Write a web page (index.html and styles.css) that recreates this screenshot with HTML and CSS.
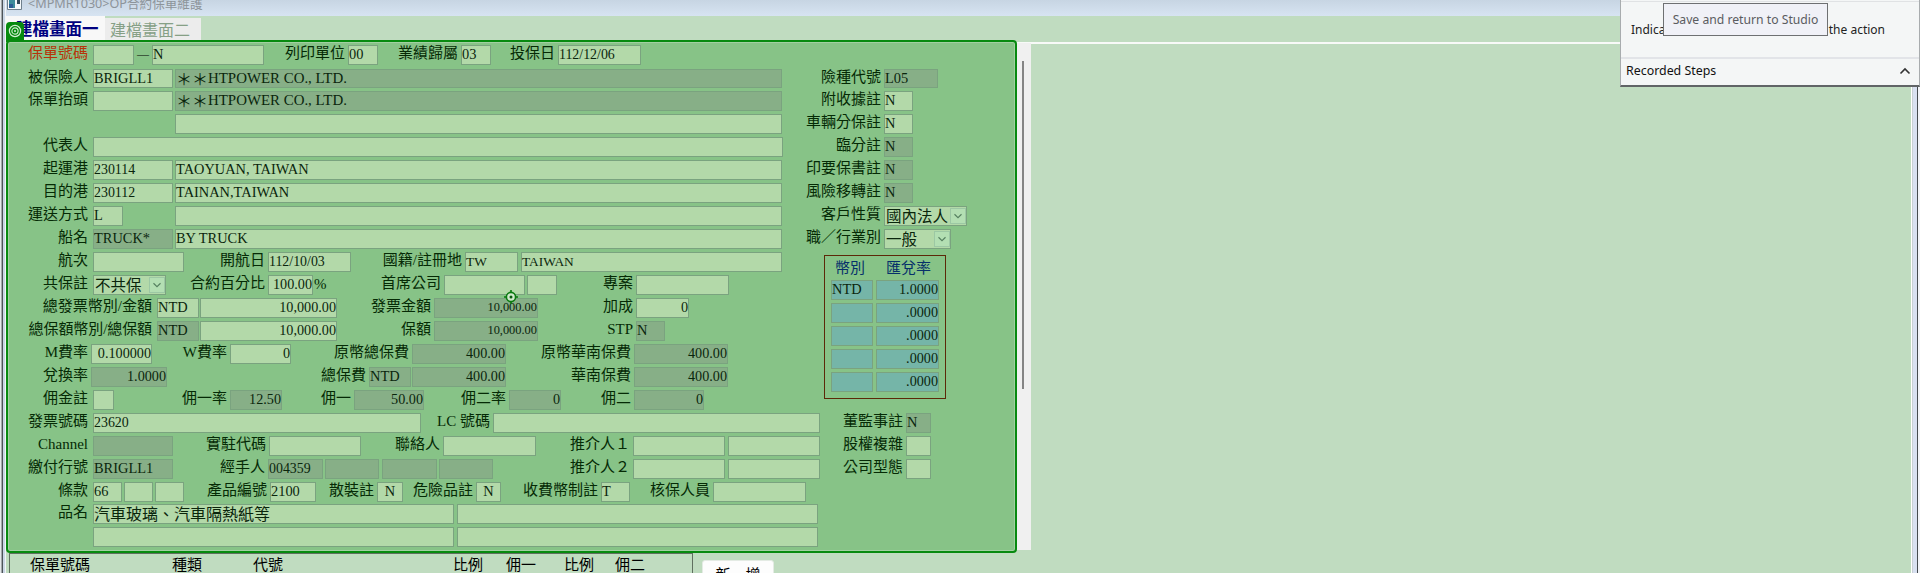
FILE: index.html
```html
<!DOCTYPE html>
<html lang="zh-Hant">
<head>
<meta charset="utf-8">
<title>OP合約保單維護</title>
<link rel="stylesheet" href="styles.css">
</head>
<body>
<div class="window">
  <div class="edge edge-left"></div>
  <main class="main">
    <header class="titlebar">
      <svg class="appicon" width="15" height="10" viewBox="0 0 15 10"><path d="M.5 0v9.5h14V0" fill="#f4f8fa" stroke="#70808c"/><path d="M2 0h6v8H2z" fill="#3c8c9c"/><path d="M2 4h4v4H2z" fill="#2c5c94"/><path d="M10 0h3v4h-3z" fill="#304858"/></svg>
      <span>&lt;MPMR1030&gt;OP合約保單維護</span>
    </header>
    <nav class="tabs">
      <div class="tab active">建檔畫面一</div>
      <div class="tab">建檔畫面二</div>
    </nav>
    <div class="work">
      <section class="panel">
        <div class="upper">
          <div class="col-left">
            <div class="row r1"><label class="red">保單號碼</label><i class="f"></i><label class="dash">—</label><i class="f">N</i><label>列印單位</label><i class="f">00</i><label>業績歸屬</label><i class="f">03</i><label>投保日</label><i class="f num">112/12/06</i></div>
            <div class="row r2"><label>被保險人</label><i class="f">BRIGLL1</i><i class="f d g2 co"><b>＊＊</b>HTPOWER CO., LTD.</i></div>
            <div class="row r2"><label>保單抬頭</label><i class="f"></i><i class="f d g2 co"><b>＊＊</b>HTPOWER CO., LTD.</i></div>
            <div class="row r4"><label></label><i class="f"></i></div>
            <div class="row r5"><label>代表人</label><i class="f"></i></div>
            <div class="row r2"><label>起運港</label><i class="f num">230114</i><i class="f g2">TAOYUAN, TAIWAN</i></div>
            <div class="row r2"><label>目的港</label><i class="f num">230112</i><i class="f g2">TAINAN,TAIWAN</i></div>
            <div class="row r8"><label>運送方式</label><i class="f">L</i><label></label><i class="f"></i></div>
            <div class="row r2"><label>船名</label><i class="f d">TRUCK*</i><i class="f g2">BY TRUCK</i></div>
            <div class="row r10"><label>航次</label><i class="f"></i><label>開航日</label><i class="f num">112/10/03</i><label>國籍/註冊地</label><i class="f sm">TW</i><i class="f g3 sm">TAIWAN</i></div>
            <div class="row r11"><label>共保註</label><i class="f sel"><span>不共保</span><svg width="16" height="16" viewBox="0 0 16 16"><path d="M4 6l4 4 4-4"/></svg></i><label>合約百分比</label><i class="f r">100.00</i><label class="pct">%</label><label>首席公司</label><i class="f"></i><i class="f g2"></i><label>專案</label><i class="f"></i></div>
            <div class="row r12"><label>總發票幣別/金額</label><i class="f">NTD</i><i class="f g1 r">10,000.00</i><label>發票金額</label><i class="f d r xs">10,000.00</i><label>加成</label><i class="f r">0</i></div>
            <div class="row r13"><label class="wide">總保額幣別/總保額</label><i class="f d">NTD</i><i class="f g1 r">10,000.00</i><label>保額</label><i class="f d r xs">10,000.00</i><label>STP</label><i class="f d">N</i></div>
            <div class="row r14"><label>M費率</label><i class="f r">0.100000</i><label>W費率</label><i class="f r">0</i><label>原幣總保費</label><i class="f d r">400.00</i><label>原幣華南保費</label><i class="f d r">400.00</i></div>
            <div class="row r15"><label>兌換率</label><i class="f d r">1.0000</i><label>總保費</label><i class="f d">NTD</i><i class="f d g1 r">400.00</i><label>華南保費</label><i class="f d r">400.00</i></div>
            <div class="row r16"><label>佣金註</label><i class="f"></i><label>佣一率</label><i class="f d r">12.50</i><label>佣一</label><i class="f d r">50.00</i><label>佣二率</label><i class="f d r">0</i><label>佣二</label><i class="f d r">0</i></div>
          </div>
          <div class="col-right">
            <div class="row q w54"><label>險種代號</label><i class="f d">L05</i></div>
            <div class="row q w29"><label>附收據註</label><i class="f">N</i></div>
            <div class="row q w29"><label>車輛分保註</label><i class="f">N</i></div>
            <div class="row q w29"><label>臨分註</label><i class="f d">N</i></div>
            <div class="row q w29"><label>印要保書註</label><i class="f d">N</i></div>
            <div class="row q w29"><label>風險移轉註</label><i class="f d">N</i></div>
            <div class="row q w83"><label>客戶性質</label><i class="f sel"><span>國內法人</span><svg width="16" height="16" viewBox="0 0 16 16"><path d="M4 6l4 4 4-4"/></svg></i></div>
            <div class="row q w67"><label>職／行業別</label><i class="f sel"><span>一般</span><svg width="16" height="16" viewBox="0 0 16 16"><path d="M4 6l4 4 4-4"/></svg></i></div>
            <div class="rates">
              <div class="rates-head"><span>幣別</span><span>匯兌率</span></div>
              <div class="rate"><i class="f t">NTD</i><i class="f t r">1.0000</i></div>
              <div class="rate"><i class="f t"></i><i class="f t r">.0000</i></div>
              <div class="rate"><i class="f t"></i><i class="f t r">.0000</i></div>
              <div class="rate"><i class="f t"></i><i class="f t r">.0000</i></div>
              <div class="rate"><i class="f t"></i><i class="f t r">.0000</i></div>
            </div>
          </div>
        </div>
        <div class="row r17"><label>發票號碼</label><i class="f num">23620</i><label>LC 號碼</label><i class="f"></i><label>董監事註</label><i class="f d">N</i></div>
        <div class="row r18"><label>Channel</label><i class="f d"></i><label>實駐代碼</label><i class="f"></i><label>聯絡人</label><i class="f"></i><label>推介人１</label><i class="f"></i><i class="f g3"></i><label>股權複雜</label><i class="f"></i></div>
        <div class="row r19"><label>繳付行號</label><i class="f d">BRIGLL1</i><label>經手人</label><i class="f d num">004359</i><i class="f d g2"></i><i class="f d g3"></i><i class="f d g2"></i><label>推介人２</label><i class="f"></i><i class="f g3"></i><label>公司型態</label><i class="f"></i></div>
        <div class="row r20"><label>條款</label><i class="f">66</i><i class="f g2"></i><i class="f g2"></i><label>產品編號</label><i class="f">2100</i><label>散裝註</label><i class="f c">N</i><label>危險品註</label><i class="f c">N</i><label>收費幣制註</label><i class="f">T</i><label>核保人員</label><i class="f"></i></div>
        <div class="row r21"><label>品名</label><i class="f cjk">汽車玻璃、汽車隔熱紙等</i><i class="f g3"></i></div>
        <div class="row r21"><label></label><i class="f"></i><i class="f g3"></i></div>
        <div class="badge"><svg width="18" height="18" viewBox="0 0 18 18" fill="none" stroke="#d5efd5"><circle cx="9" cy="9" r="5.6" stroke-width="1.2"/><circle cx="9" cy="9" r="3.1" stroke-width="1.1"/><circle cx="9" cy="9" r="1" fill="#d5efd5" stroke="none"/></svg></div>
        <svg class="target" width="14" height="14" viewBox="0 0 14 14"><path d="M7 0v14M0 7h14" stroke="#0a7a10" stroke-width="1.6"/><circle cx="7" cy="7" r="4.6" fill="#cfeacb" stroke="#0a7a10" stroke-width="1.6"/><circle cx="7" cy="7" r="1.5" fill="#0a5a10"/></svg>
      </section>
      <div class="scroll"><div class="thumb"></div></div>
    </div>
    <footer class="footer">
      <div class="list-head"><span>保單號碼</span><span>種類</span><span>代號</span><span>比例</span><span>佣一</span><span>比例</span><span>佣二</span></div>
      <button class="add">新　增</button>
    </footer>
  </main>
  <div class="edge edge-right"></div>
</div>
<aside class="recorder">
  <div class="rec-msg"><span>Indica</span><span>the action</span></div>
  <div class="rec-steps"><span>Recorded Steps</span><svg width="12" height="8" viewBox="0 0 12 8"><path d="M1.5 6.5L6 2l4.500 4.500" fill="none" stroke="#333" stroke-width="1.6"/></svg></div>
  <div class="tip">Save and return to Studio</div>
</aside>
</body>
</html>
```
FILE: styles.css
```css
* { box-sizing: border-box; }
body { margin: 0; width: 1920px; height: 573px; overflow: hidden; background: #c0dcc0; font-family: "Liberation Serif", "Noto Sans CJK TC", serif; }
.window { display: flex; height: 573px; }
.edge { flex: none; }
.edge-left { width: 6px; background: linear-gradient(90deg, #e4e8ea 0 1px, #a4a9ac 1px 2px, #4c5358 2px 3px, #c9d6e4 3px 5px, #f4f6f8 5px 6px); }
.edge-right { width: 9px; background: linear-gradient(90deg, #fff 0 1px, #c8d0d4 1px 2px, #d8e0f0 2px 6px, #454a4e 6px 7px, #f2f4f8 7px); }
.main { width: 1905px; display: flex; flex-direction: column; overflow: hidden; }
.titlebar { height: 16px; flex: none; display: flex; background: linear-gradient(#c7d5e3, #d7e4f2); font-family: "Noto Sans", "Noto Sans CJK TC", sans-serif; color: #8d949a; }
.titlebar span { margin: -4px 0 0 6px; font-size: 12.600px; line-height: 16px; white-space: nowrap; }
.appicon { margin-left: 1px; }
.tabs { height: 24px; flex: none; display: flex; align-items: flex-end; }
.tab { width: 96px; height: 22px; background: #ececec; color: #86a086; font: 400 16px/22px "Noto Sans CJK TC", sans-serif; padding-left: 5px; white-space: nowrap; }
.tab.active { width: 99px; height: 24px; background: #f8f8f8; color: #000080; font-weight: 700; font-size: 16.500px; line-height: 24px; padding-left: 10px; }
.work { height: 513px; flex: none; display: flex; align-items: flex-start; background: linear-gradient(#c0dcc0 0 2px, #f8faf8 2px 4px, #c0dcc0 4px); }
.panel { position: relative; width: 1011px; height: 513px; flex: none; border: 2px solid #078a0f; border-radius: 4px; background: #87c387; box-shadow: inset 0 0 0 1px #a2d0a2; padding-top: 3px; }
.upper { display: flex; height: 368px; }
.col-left { width: 775px; flex: none; }
.col-right { width: 232px; padding-top: 24px; }
.row { display: grid; height: 20px; margin-bottom: 3px; }
.r1 { margin-bottom: 4px; }
.col-left .r1 + .r2, .col-right .row:first-child { height: 19px; }
.row label { display: flex; justify-content: flex-end; padding-right: 3px; font: 400 15px/17px "Liberation Serif", "Noto Sans CJK TC", serif; white-space: nowrap; color: #052a05; min-width: 0; }
.row label:first-child { padding-right: 5px; }
.row label.red { color: #b83208; }
.row label.wide { letter-spacing: -.08px; }
.row label.dash { padding-right: 3px; font-size: 12px; line-height: 19px; color: #000; }
.row label.pct { justify-content: flex-start; padding: 0 0 0 1px; line-height: 18px; }
.f { display: block; font-style: normal; font-size: 14.400px; line-height: 17px; border: 1px solid #7aa37f; background: #b3d9a9; color: #0a250c; white-space: nowrap; padding-left: 0; min-width: 0; }
.co { display: flex; font-size: 14.900px; }
.f b { font: 400 16px/17px "Noto Sans CJK TC", sans-serif; flex: none; }
.d { background: #87af87; }
.t { background: #75b5a8; }
.r { text-align: right; font-size: 14.200px; padding-right: 0; }
.num { font-size: 13.900px; }
.sm { font-size: 13.400px; }
.xs { font-size: 12.400px; }
.c { text-align: center; }
.cjk { font: 400 16px/17px "Noto Sans CJK TC", sans-serif; padding: 0; }
.g1 { margin-left: 1px; }
.g2 { margin-left: 2px; }
.g3 { margin-left: 3px; }
.sel { display: flex; justify-content: space-between; align-items: center; font: 400 15.500px/16px "Noto Sans CJK TC", sans-serif; padding: 0 0 0 1px; }
.sel span { line-height: 16px; margin-top: -2px; }
.sel svg { flex: none; background: #b3dfb3; border: 1px solid #9cc8a4; fill: none; stroke: #568060; stroke-width: 1.3; }

.r1 { grid-template-columns: 85px 41px 18px 112px 84px 30px 83px 30px 67px 83px; }
.r2 { grid-template-columns: 85px 80px 609px; }
.r4 { grid-template-columns: 167px 607px; }
.r5 { grid-template-columns: 85px 690px; }
.r8 { grid-template-columns: 85px 30px 52px 607px; }
.r10 { grid-template-columns: 85px 91px 84px 83px 114px 53px 264px; }
.r11 { grid-template-columns: 85px 73px 102px 45px 16px 115px 81px 32px 79px 93px; }
.r12 { grid-template-columns: 149px 42px 138px 97px 104px 98px 53px; }
.r13 { grid-template-columns: 149px 42px 138px 97px 104px 98px 29px; }
.r14 { grid-template-columns: 83px 61px 78px 61px 121px 94px 128px 94px; }
.r15 { grid-template-columns: 83px 76px 202px 42px 95px 128px 94px; }
.r16 { grid-template-columns: 85px 21px 116px 52px 72px 70px 85px 52px 73px 70px; }
.r17 { grid-template-columns: 85px 328px 72px 327px 86px 25px; }
.r18 { grid-template-columns: 85px 80px 96px 92px 82px 93px 97px 92px 95px 86px 25px; }
.r19 { grid-template-columns: 85px 80px 95px 55px 56px 58px 56px 140px 92px 95px 86px 25px; }
.r20 { grid-template-columns: 85px 29px 31px 31px 86px 46px 61px 26px 73px 25px 100px 29px 83px 93px; margin-bottom: 2px; }
.r21 { grid-template-columns: 85px 361px 364px; }
.r14 label:first-child, .r15 label:first-child, .q label:first-child { padding-right: 3px; }
.w54 { grid-template-columns: 101px 54px; }
.w29 { grid-template-columns: 101px 29px; }
.w83 { grid-template-columns: 101px 83px; }
.w67 { grid-template-columns: 101px 67px; }

.rates { width: 122px; height: 144px; margin: 6px 0 0 41px; border: 1px solid #5c2808; padding: 3px 6px 0; }
.rates-head { display: flex; justify-content: space-between; height: 21px; padding: 0 8px 0 4px; font: 400 15px/15px "Noto Sans CJK TC", sans-serif; color: #06306a; }
.rate { display: grid; grid-template-columns: 42px 63px; column-gap: 3px; height: 20px; margin-bottom: 3px; }
.badge { position: absolute; left: -2px; top: -20px; width: 18px; height: 20px; background: #078a0f; border-radius: 4px 4px 0 0; }
.target { position: absolute; left: 496px; top: 248px; }
.scroll { width: 14px; height: 507px; margin-top: 3px; background: #f0f0f0; display: flex; padding: 18px 0 0 5px; }
.thumb { width: 2px; height: 328px; background: #858585; }
.footer { display: flex; height: 20px; flex: none; }
.list-head { width: 684px; margin-left: 3px; border: 1px solid #5f6f5f; border-bottom: 0; display: grid; grid-template-columns: 142px 81px 200px 53px 58px 51px 60px; padding-left: 20px; font: 400 15px/19px "Noto Sans CJK TC", sans-serif; color: #000; }
.add { width: 72px; height: 28px; flex: none; margin: 7px 0 0 9px; padding: 0; border: 1px solid #e4ebe4; border-radius: 3px; background: #fdfdfd; font: 400 15px/18px "Noto Sans CJK TC", sans-serif; color: #000; }

.recorder { position: absolute; left: 1620px; top: 0; width: 300px; height: 87px; background: #f4f6f6; border: solid #a8acae; border-width: 0 1px 2px 1px; border-bottom-color: #606466; font: 12.400px/20px "Noto Sans", sans-serif; color: #222; }
.rec-msg { height: 58px; border-top: 1px solid #e0e2e4; border-bottom: 2px solid #e2e4e8; margin-top: 1px; padding: 18px 34px 0 10px; display: flex; justify-content: space-between; font-size: 12px; }
.rec-steps { display: flex; justify-content: space-between; align-items: center; padding: 0 8px 2px 5px; height: 25px; color: #111; }
.tip { position: absolute; left: 42px; top: 3px; width: 165px; height: 33px; border: 1px solid #6e7072; background: #f0f1f7; color: #5a5c60; text-align: center; font-size: 12.200px; line-height: 32px; }
```
